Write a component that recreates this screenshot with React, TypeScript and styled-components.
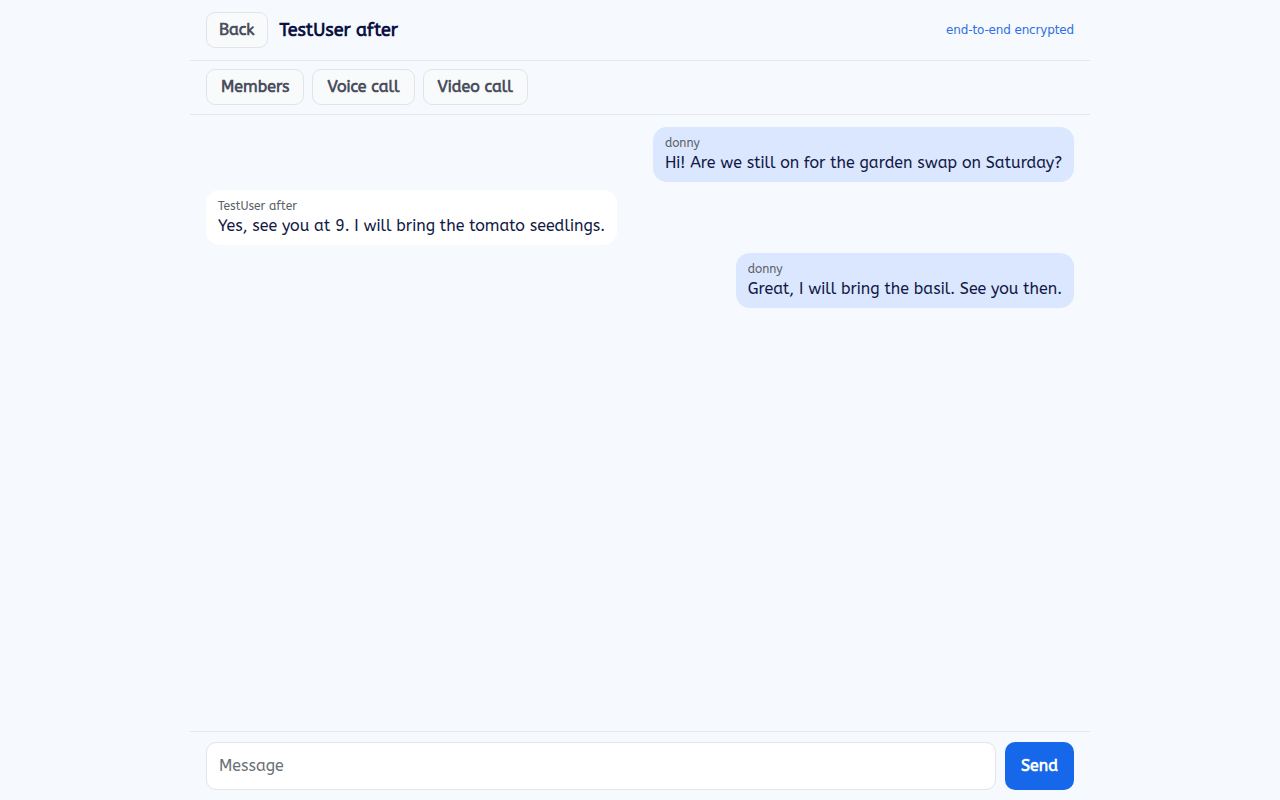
import styled, { createGlobalStyle } from "styled-components";
import { FC } from "react";

type Message = {
  id: number;
  author: string;
  text: string;
  mine: boolean;
};

const messages: Message[] = [
  { id: 1, author: "donny", text: "Hi! Are we still on for the garden swap on Saturday?", mine: true },
  { id: 2, author: "TestUser after", text: "Yes, see you at 9. I will bring the tomato seedlings.", mine: false },
  { id: 3, author: "donny", text: "Great, I will bring the basil. See you then.", mine: true },
];

const GlobalStyle = createGlobalStyle`
  html, body, #root {
    height: 100%;
  }

  body {
    margin: 0;
    background: #f6f9fd;
    font-family: "ABeeZee", "Andika", "Noto Sans", sans-serif;
    color: #0f1540;
  }

  * {
    box-sizing: border-box;
  }
`;

const Shell = styled.div`
  width: 900px;
  height: 100vh;
  margin: 0 auto;
  display: flex;
  flex-direction: column;
`;

const Header = styled.header`
  height: 61px;
  padding: 0 16px;
  display: flex;
  align-items: center;
  gap: 12px;
  border-bottom: 1px solid #e3e6ea;
`;

const Title = styled.h1`
  margin: 0;
  flex: 1;
  font-size: 18px;
  font-weight: 700;
  color: #0b1244;
`;

const Badge = styled.span`
  font-family: "DejaVu Sans", sans-serif;
  font-size: 12px;
  letter-spacing: -0.15px;
  color: #2f6fe4;
`;

const Toolbar = styled.nav`
  height: 54px;
  padding: 8px 16px 0;
  display: flex;
  align-items: flex-start;
  gap: 8px;
  border-bottom: 1px solid #e3e6ea;
`;

const GhostBtn = styled.button<{ $compact?: boolean }>`
  height: 36px;
  padding: 0 ${({ $compact }) => ($compact ? "12px" : "14px")} 2px;
  border: 1px solid #e1e4e8;
  border-radius: 9px;
  background: #f8fafc;
  font-family: inherit;
  font-size: 16px;
  font-weight: 700;
  color: #4a4f5c;
  cursor: pointer;
`;

const Feed = styled.main`
  flex: 1;
  padding: 12px 16px;
  display: flex;
  flex-direction: column;
  gap: 8px;
  overflow-y: auto;
`;

const Bubble = styled.div<{ $mine: boolean }>`
  align-self: ${({ $mine }) => ($mine ? "flex-end" : "flex-start")};
  max-width: 70%;
  padding: 8px 12px;
  border-radius: 14px;
  background: ${({ $mine }) => ($mine ? "#dbe7fe" : "#ffffff")};
`;

const Author = styled.div`
  font-size: 12px;
  line-height: 17px;
  color: #5b5f68;
`;

const Body = styled.div`
  font-size: 16px;
  line-height: 22px;
  color: #111845;
`;

const Composer = styled.form`
  padding: 10px 16px;
  display: flex;
  gap: 9px;
  border-top: 1px solid #e3e6ea;
`;

const Input = styled.input`
  flex: 1;
  height: 48px;
  padding: 0 12px 2px;
  border: 1px solid #e1e4e8;
  border-radius: 10px;
  background: #ffffff;
  font-family: inherit;
  font-size: 16px;
  color: #111845;

  &::placeholder {
    color: #6b6f78;
  }
`;

const SendBtn = styled.button`
  width: 69px;
  height: 48px;
  padding: 0 0 2px;
  border: none;
  border-radius: 10px;
  background: #1767eb;
  font-family: inherit;
  font-size: 16px;
  font-weight: 700;
  color: #ffffff;
  cursor: pointer;
`;

const App: FC = () => (
  <>
    <GlobalStyle />
    <Shell>
      <Header>
        <GhostBtn type="button" $compact>
          Back
        </GhostBtn>
        <Title>TestUser after</Title>
        <Badge>end-to-end encrypted</Badge>
      </Header>
      <Toolbar>
        <GhostBtn type="button">Members</GhostBtn>
        <GhostBtn type="button">Voice call</GhostBtn>
        <GhostBtn type="button">Video call</GhostBtn>
      </Toolbar>
      <Feed>
        {messages.map((m) => (
          <Bubble key={m.id} $mine={m.mine}>
            <Author>{m.author}</Author>
            <Body>{m.text}</Body>
          </Bubble>
        ))}
      </Feed>
      <Composer onSubmit={(e) => e.preventDefault()}>
        <Input placeholder="Message" />
        <SendBtn type="submit">Send</SendBtn>
      </Composer>
    </Shell>
  </>
);

export default App;
